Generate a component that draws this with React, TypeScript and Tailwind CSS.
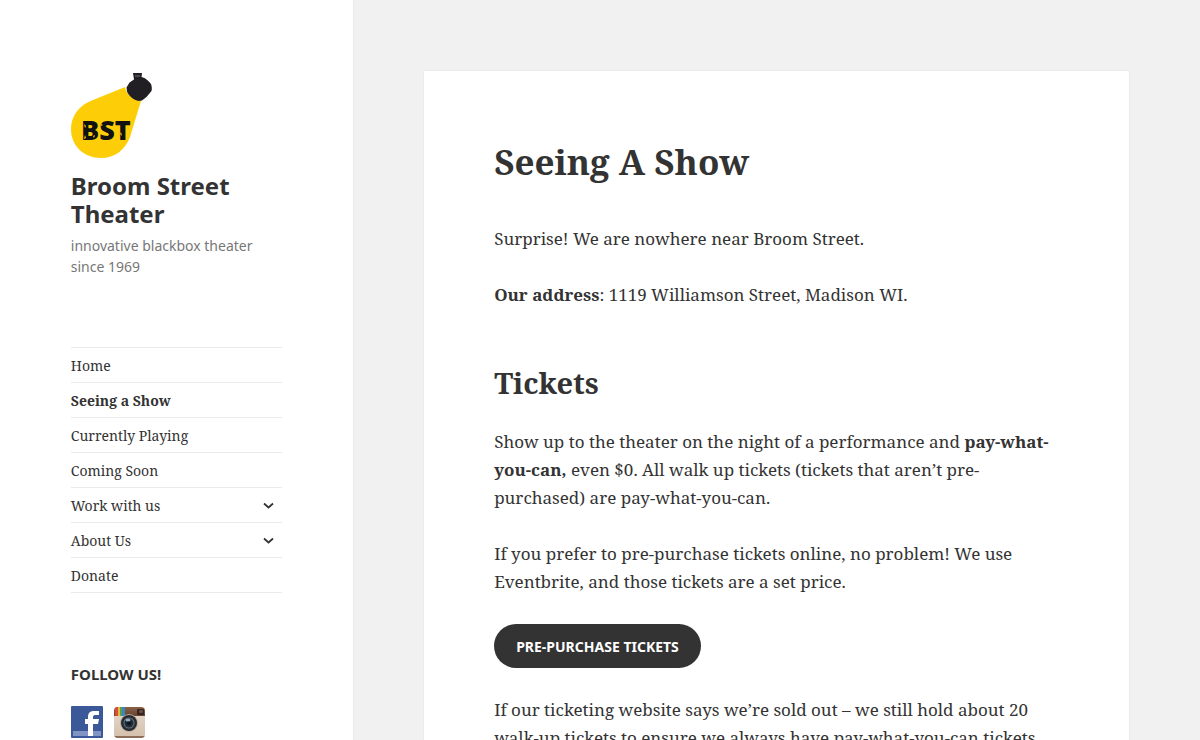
import React from "react";

const menuItems = [
  { label: "Home" },
  { label: "Seeing a Show", current: true },
  { label: "Currently Playing" },
  { label: "Coming Soon" },
  { label: "Work with us", hasChildren: true },
  { label: "About Us", hasChildren: true },
  { label: "Donate" },
];

const Logo: React.FC<{}> = () => (
  <svg width="82" height="88" viewBox="1 0 82 88" role="img" aria-label="BST">
    <path
      d="M55 15 L23 28 C9 33 1 44 1 57 C1 74 14 86 31 86 C45 86 55 78 60 65 L71 29 C63 28 56 22 55 15Z"
      fill="#fdce07"
    />
    <path
      d="M63 1h9l-.5 4 3 1c3 2 5 4 6.500 6 1 3 1 5 .5 7l-5 6-4.500 3.500-3 .5c-6-1-10-5-12-9.500l-.5-4 3-5 4.500-3z"
      fill="#211f24"
    />
    <path d="M65 4h5" stroke="#77747a" strokeWidth="1" />
    <text
      x="11"
      y="68"
      fontFamily="'Noto Sans', sans-serif"
      fontSize="27"
      fontWeight="900"
      fill="#111"
    >
      BST
    </text>
    {/* worn ink flecks */}
    <path
      d="M14 52l2 2-1 2zM15 63l1 3-2 1zM23 64l2-1-1 3zM31 52l2 1-2 1zM36 63l2-2v3zM48 54l2 1-1 3zM50 62l1-2 1 4z"
      fill="#fdce07"
    />
  </svg>
);

const FacebookIcon: React.FC<{}> = () => (
  <svg width="32" height="32" viewBox="0 0 32 32" aria-hidden="true">
    <rect width="32" height="32" rx="1" fill="#3b5998" />
    <rect x="2" y="25" width="28" height="5" fill="#8294c3" />
    <path
      d="M17 30V18h-3v-5h3v-2c0-4 2-6 6-6h5v4h-3c-2 0-3 .5-3 2v2h6l-1 5h-5v12z"
      fill="#fff"
    />
  </svg>
);

const InstagramIcon: React.FC<{}> = () => (
  <svg width="32" height="32" viewBox="0 0 32 32" aria-hidden="true">
    <defs>
      <clipPath id="camera">
        <rect x="0" y="1" width="31" height="31" rx="4" />
      </clipPath>
      <linearGradient id="leather" x2="0" y2="1">
        <stop stopColor="#8b6047" />
        <stop offset="1" stopColor="#684330" />
      </linearGradient>
      <linearGradient id="body" x2="0" y2="1">
        <stop stopColor="#e6dccf" />
        <stop offset="1" stopColor="#d3c0ac" />
      </linearGradient>
    </defs>
    <g clipPath="url(#camera)">
      <rect y="1" width="31" height="31" fill="url(#body)" />
      <rect y="1" width="31" height="9" fill="url(#leather)" />
      <path d="M1 1h3v9H1z" fill="#d94c35" />
      <path d="M4 1h2v9H4z" fill="#e7b842" />
      <path d="M6 1h2v9H6z" fill="#52a257" />
      <path d="M8 1h3v9H8z" fill="#3b87b7" />
      <path d="M0 30h31v2H0z" fill="#8d6d58" />
    </g>
    <rect x="23" y="3" width="7" height="6" rx="1" fill="#35231e" />
    <rect x="25" y="4" width="4" height="3" rx="1" fill="#674f48" />
    <circle cx="15" cy="17" r="9" fill="#b8aaa0" />
    <circle cx="15" cy="17" r="8" fill="#292b30" />
    <circle cx="15" cy="17" r="5.500" fill="#647580" />
    <circle cx="15" cy="17" r="4.500" fill="#202b38" />
    <circle cx="15" cy="17" r="2" fill="#0c121c" />
    <ellipse cx="14" cy="14" rx="2.500" ry="1.500" fill="#8fb0c0" />
  </svg>
);

const Sidebar: React.FC<{}> = () => (
  <aside className="w-[29.5%] shrink-0 border-r border-[#eaeaea] bg-white px-[5.9%] pt-18">
    <header>
      <a href="#" className="block">
        <Logo />
      </a>
      <p className="mt-3 font-['Noto_Sans',sans-serif] text-2xl leading-7 font-bold">
        <a href="#">Broom Street Theater</a>
      </p>
      <p className="mt-[7px] font-['Noto_Sans',sans-serif] text-sm leading-[21px] text-[#777]">
        innovative blackbox theater since 1969
      </p>
    </header>
    <nav className="mt-[70px]">
      <ul className="border-t border-[#eaeaea]">
        {menuItems.map((item) => (
          <li
            key={item.label}
            className="flex items-center justify-between border-b border-[#eaeaea] pt-2 pb-1.5"
          >
            <a
              href="#"
              className={
                item.current
                  ? "text-sm leading-5 font-bold"
                  : "text-sm leading-5"
              }
            >
              {item.label}
            </a>
            {item.hasChildren && (
              <button className="px-2" aria-label={"Expand " + item.label}>
                <svg width="11" height="8" viewBox="0 0 11 8" fill="none">
                  <path
                    d="M1 1.500l4.500 4 4.500-4"
                    stroke="#333"
                    strokeWidth="1.700"
                  />
                </svg>
              </button>
            )}
          </li>
        ))}
      </ul>
    </nav>
    <section className="mt-[71px]">
      <h2 className="font-['Noto_Sans',sans-serif] text-[15px] leading-5 font-bold">
        FOLLOW US!
      </h2>
      <div className="mt-[22px] flex gap-[11px]">
        <a href="#" aria-label="Facebook">
          <FacebookIcon />
        </a>
        <a href="#" aria-label="Instagram">
          <InstagramIcon />
        </a>
      </div>
    </section>
  </aside>
);

const Article: React.FC<{}> = () => (
  <article className="bg-white p-[10%] text-[17px] leading-7 shadow-[0_0_1px_rgba(0,0,0,0.15)]">
    <h1 className="text-[35px] leading-10 font-bold">Seeing A Show</h1>
    <p className="mt-[43px]">Surprise! We are nowhere near Broom Street.</p>
    <p className="mt-7">
      <strong>Our address</strong>: 1119 Williamson Street, Madison WI.
    </p>
    <h2 className="mt-14 text-[29px] leading-9 font-bold">Tickets</h2>
    <p className="mt-[27px]">
      Show up to the theater on the night of a performance and{" "}
      <strong>
        pay-what-
        <br />
        you-can,
      </strong>{" "}
      even $0. All walk up tickets (tickets that aren’t pre-
      <br />
      purchased) are pay-what-you-can.
    </p>
    <p className="mt-7">
      If you prefer to pre-purchase tickets online, no problem! We use
      <br />
      Eventbrite, and those tickets are a set price.
    </p>
    <a
      href="#"
      className="mt-7 inline-block rounded-full bg-[#333] px-[22px] pt-[13px] pb-[11px] font-['Noto_Sans',sans-serif] text-sm leading-5 font-bold text-white"
    >
      PRE-PURCHASE TICKETS
    </a>
    <p className="mt-7">
      If our ticketing website says we’re sold out – we still hold about 20
      <br />
      walk-up tickets to ensure we always have pay-what-you-can tickets
    </p>
  </article>
);

const App: React.FC<{}> = () => {
  return (
    <div className="flex min-h-screen bg-[#f1f1f1] font-['Noto_Serif',serif] text-[#333]">
      <Sidebar />
      <main className="min-w-0 flex-1 pt-[71px] pr-[5.9%] pl-[5.8%]">
        <Article />
      </main>
    </div>
  );
};

export default App;
